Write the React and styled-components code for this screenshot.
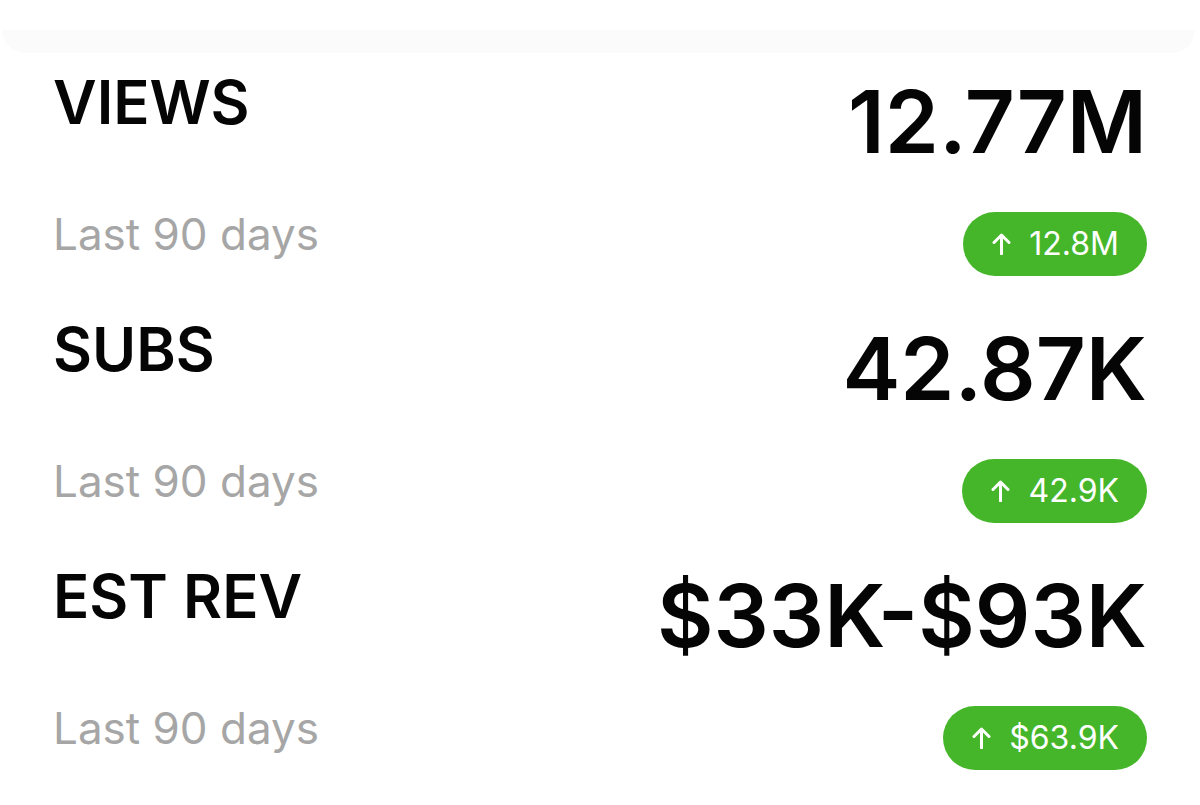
import React from "react";
import styled, { createGlobalStyle } from "styled-components";

const GlobalStyle = createGlobalStyle`
  html, body {
    margin: 0;
    padding: 0;
    background: #ffffff;
  }
  body {
    font-family: Inter, "Noto Sans", "Liberation Sans", sans-serif;
    color: #000;
  }
`;

const stats = [
  { label: "VIEWS", value: "12.77M", period: "Last 90 days", change: "12.8M" },
  { label: "SUBS", value: "42.87K", period: "Last 90 days", change: "42.9K" },
  { label: "EST REV", value: "$33K-$93K", period: "Last 90 days", change: "$63.9K" },
];

const Page = styled.div`
  width: 1200px;
  height: 805px;
  overflow: hidden;
  background: #fff;
`;

const TopEdge = styled.div`
  height: 23px;
  margin: 30px 5px 0 2px;
  background: #fbfbfb;
  border-radius: 0 0 26px 26px;
`;

const List = styled.div`
  display: flex;
  flex-direction: column;
  gap: 41px;
  padding: 17px 53px 0 53px;
`;

const Stat = styled.section`
  display: flex;
  flex-direction: column;
  gap: 45px;
`;

const Header = styled.div`
  display: flex;
  justify-content: space-between;
  align-items: flex-start;
  height: 94px;
`;

const Label = styled.h2`
  margin: 2px 0 0;
  font-size: 60px;
  line-height: 1;
  font-weight: 600;
  color: #050505;
`;

const Value = styled.div`
  margin-top: 8px;
  font-size: 87px;
  line-height: 1;
  font-weight: 600;
  color: #050505;
`;

const Footer = styled.div`
  display: flex;
  justify-content: space-between;
  align-items: flex-start;
  height: 67px;
`;

const Period = styled.span`
  margin-top: 3px;
  font-size: 44px;
  line-height: 1;
  font-weight: 400;
  color: #a6a6a6;
`;

const Badge = styled.span`
  margin-top: 3px;
  height: 64px;
  box-sizing: border-box;
  display: inline-flex;
  align-items: center;
  gap: 18px;
  padding: 0 28px 0 29px;
  border-radius: 32px;
  background: #45b62a;
  color: #fff;
  font-size: 32px;
  font-weight: 400;
  line-height: 1;
`;

const UpArrow = () => (
  <svg width="19" height="22" viewBox="0 0 19 22" fill="none">
    <path
      d="M9.5 21V2M2 9.5L9.5 2L17 9.5"
      stroke="#fff"
      strokeWidth="3"
      strokeLinecap="round"
      strokeLinejoin="round"
    />
  </svg>
);

export default function App() {
  return (
    <Page>
      <GlobalStyle />
      <TopEdge />
      <List>
        {stats.map((s) => (
          <Stat key={s.label}>
            <Header>
              <Label>{s.label}</Label>
              <Value>{s.value}</Value>
            </Header>
            <Footer>
              <Period>{s.period}</Period>
              <Badge>
                <UpArrow />
                {s.change}
              </Badge>
            </Footer>
          </Stat>
        ))}
      </List>
    </Page>
  );
}
